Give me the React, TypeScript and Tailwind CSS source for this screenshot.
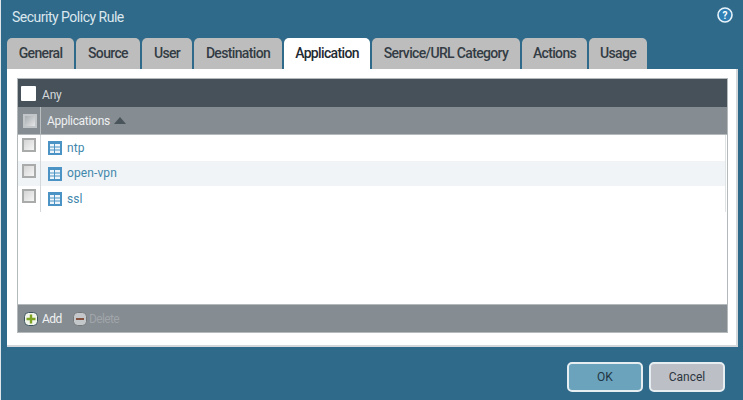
const tabs = [
  { name: 'General', w: 'w-[67px]' },
  { name: 'Source', w: 'w-[64px]' },
  { name: 'User', w: 'w-[50px]' },
  { name: 'Destination', w: 'w-[88px]' },
  { name: 'Application', w: 'w-[86px]', active: true },
  { name: 'Service/URL Category', w: 'w-[148px]' },
  { name: 'Actions', w: 'w-[65px]' },
  { name: 'Usage', w: 'w-[58px]' },
];

const rows = [
  { name: 'ntp', bg: 'bg-white' },
  { name: 'open-vpn', bg: 'bg-[#f1f4f6]' },
  { name: 'ssl', bg: 'bg-white' },
];

const TableIcon = () => (
  <svg width="14" height="14" viewBox="0 0 14 14" className="shrink-0 mt-[1px]">
    <rect x="0" y="0" width="14" height="14" fill="#4a93c4" />
    <rect x="2" y="3" width="10" height="9" fill="#eef5fa" />
    <path d="M2 6H12M2 9H12M6.5 3V12" stroke="#4a93c4" strokeWidth="1" fill="none" />
  </svg>
);

const Check = ({ className }: { className: string }) => (
  <div className={`w-[14px] h-[14px] border-2 bg-gradient-to-br ${className}`} />
);

export default function App() {
  return (
    <div className="w-[743px] h-[400px] overflow-hidden bg-[#306a8a] border-l border-[#dfe6ea] flex flex-col font-['Roboto','Liberation_Sans',sans-serif]">
      <div className="h-[38px] shrink-0 flex items-start justify-between pl-[11px] pr-[10px] pt-[7px]">
        <span className="text-[14px] leading-[20px] text-[#dbe7ee] tracking-[-0.5px]">Security Policy Rule</span>
        <svg width="16" height="16" viewBox="0 0 16 16">
          <circle cx="8" cy="8" r="7" fill="#2f7fb5" stroke="#e8f2f8" strokeWidth="1.6" />
          <text x="8" y="11.5" textAnchor="middle" fontSize="10" fontWeight="700" fill="#fff" fontFamily="Roboto">?</text>
        </svg>
      </div>

      <div className="flex h-[31px] shrink-0 pl-[6px] gap-[2px]">
        {tabs.map((t) => (
          <div
            key={t.name}
            className={`${t.w} rounded-t-[5px] flex items-center justify-center text-[14px] font-medium tracking-[-0.65px] ${t.active ? 'bg-white text-[#1f2a33]' : 'bg-[#bdbdbd] text-[#333c44]'}`}
          >
            {t.name}
          </div>
        ))}
      </div>

      <div className="ml-[6px] w-[731px] h-[278px] shrink-0 bg-white border-b-2 border-r-2 border-[#d4d8da] pt-[9px] pl-[10px] pr-[8px]">
        <div className="h-[255px] border border-[#b4b9bc] flex flex-col">
          <div className="h-[28px] shrink-0 bg-[#465159] flex items-center pl-[3px] gap-[6px]">
            <div className="w-[15px] h-[15px] bg-white rounded-[1px]" />
            <span className="text-[12px] text-[#d5d9dc] tracking-[-0.2px] mt-[4px]">Any</span>
          </div>
          <div className="h-[28px] shrink-0 bg-[#858c92] flex items-center border-b border-[#b4b9bc]">
            <div className="w-[22px] h-full flex items-center justify-center border-r border-[#b9bec1] ml-[1px]">
              <Check className="border-[#c3c6c8] from-[#a9adb0] to-[#e4e5e6]" />
            </div>
            <span className="ml-[6px] mt-[1px] text-[12px] text-[#eef0f1] tracking-[-0.3px]">Applications</span>
            <svg width="12" height="7" viewBox="0 0 12 7" className="ml-[4px]">
              <path d="M6 0L12 7H0Z" fill="#4a545b" />
            </svg>
          </div>
          <div className="flex-1 flex flex-col">
            {rows.map((r) => (
              <div key={r.name} className={`h-[25.5px] flex items-center mr-[1px] border-r border-[#e0e3e5] ${r.bg}`}>
                <div className="w-[23px] h-full flex justify-center border-r border-[#d5d8da] shrink-0">
                  <Check className="mt-[3px] border-[#a9abab] from-[#d4d4d4] to-[#f6f6f6]" />
                </div>
                <div className="ml-[7px] flex items-center gap-[5px]">
                  <TableIcon />
                  <span className="text-[12px] text-[#3f87ac] tracking-[0.1px]">{r.name}</span>
                </div>
              </div>
            ))}
          </div>
          <div className="h-[28px] shrink-0 bg-[#858c92] flex items-center pl-[6px] border-t border-[#b4b9bc]">
            <svg width="14" height="14" viewBox="0 0 14 14">
              <rect x="0.5" y="0.5" width="13" height="13" rx="4" fill="#f2f5ec" stroke="#3f5560" />
              <path d="M7 2.5V11.5M2.5 7H11.5" stroke="#7ea322" strokeWidth="2.4" />
            </svg>
            <span className="ml-[4px] text-[12px] text-[#f0f2f3] tracking-[-0.5px]">Add</span>
            <svg width="14" height="14" viewBox="0 0 14 14" className="ml-[11px]">
              <rect x="0.5" y="0.5" width="13" height="13" rx="4" fill="#c4c7c9" stroke="#75797c" />
              <path d="M3 7H11" stroke="#86503f" strokeWidth="2" />
            </svg>
            <span className="ml-[2px] text-[12px] text-[#a0a5a9] tracking-[-0.6px]">Delete</span>
          </div>
        </div>
      </div>

      <div className="flex-1 flex justify-end items-start pt-[15px] pr-[18px] gap-[6px]">
        <div className="w-[76px] h-[30px] rounded-[5px] border-2 border-[#e6eef2] bg-[#6ba3bc] flex items-center justify-center text-[12px] text-[#1f3644]">OK</div>
        <div className="w-[76px] h-[30px] rounded-[5px] border-2 border-[#e6eef2] bg-[#bdbfc6] flex items-center justify-center text-[12px] text-[#2c3640]">Cancel</div>
      </div>
    </div>
  );
}
